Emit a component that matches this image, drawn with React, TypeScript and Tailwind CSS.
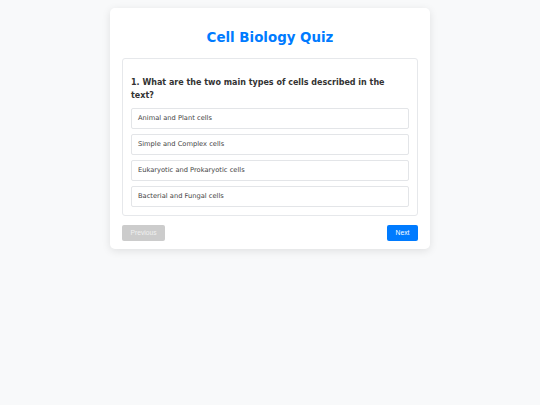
import { useState } from 'react'

const QUESTION = 'What are the two main types of cells described in the text?'

const OPTIONS = [
  'Animal and Plant cells',
  'Simple and Complex cells',
  'Eukaryotic and Prokaryotic cells',
  'Bacterial and Fungal cells',
]

export default function App() {
  const [selected, setSelected] = useState<number | null>(null)

  return (
    <div className="min-h-screen bg-[#f8f9fa] pt-[8px] font-['DejaVu_Sans',sans-serif]">
      <div className="mx-auto w-[320px] rounded-[5px] bg-white px-[12px] pb-[8px] pt-[13px] shadow-[0_2px_8px_rgba(0,0,0,0.1)]">
        <h1 className="mb-[12px] mt-[9px] text-center text-[13.4px] font-bold leading-[16px] text-[#007bff]">
          Cell Biology Quiz
        </h1>

        {/* Pregunta */}
        <div className="rounded-[3px] border border-[#e6e8eb] px-[8px] pb-[8px] pt-[17px]">
          <h3 className="mb-[6px] text-[8px] font-bold leading-[13px] text-[#333333]">
            {`1. ${QUESTION}`}
          </h3>
          <div className="flex flex-col gap-[5px]">
            {OPTIONS.map((opt, i) => (
              <button
                key={opt}
                type="button"
                onClick={() => setSelected(i)}
                className={`flex h-[21px] items-center rounded-[2px] border px-[6px] text-left text-[6.7px] text-[#444444] ${
                  selected === i ? 'border-[#007bff] bg-[#e7f1ff]' : 'border-[#e3e5e8] bg-white'
                }`}
              >
                {opt}
              </button>
            ))}
          </div>
        </div>

        <div className="mt-[9px] flex items-center justify-between font-['Liberation_Sans',Arial,sans-serif]">
          <button
            type="button"
            disabled
            className="h-[16px] w-[43px] rounded-[2px] bg-[#cccccc] text-[6.7px] text-[#f0f0f0]"
          >
            Previous
          </button>
          <button
            type="button"
            className="h-[16px] w-[31px] rounded-[2px] bg-[#007bff] text-[6.7px] text-white"
          >
            Next
          </button>
        </div>
      </div>
    </div>
  )
}
